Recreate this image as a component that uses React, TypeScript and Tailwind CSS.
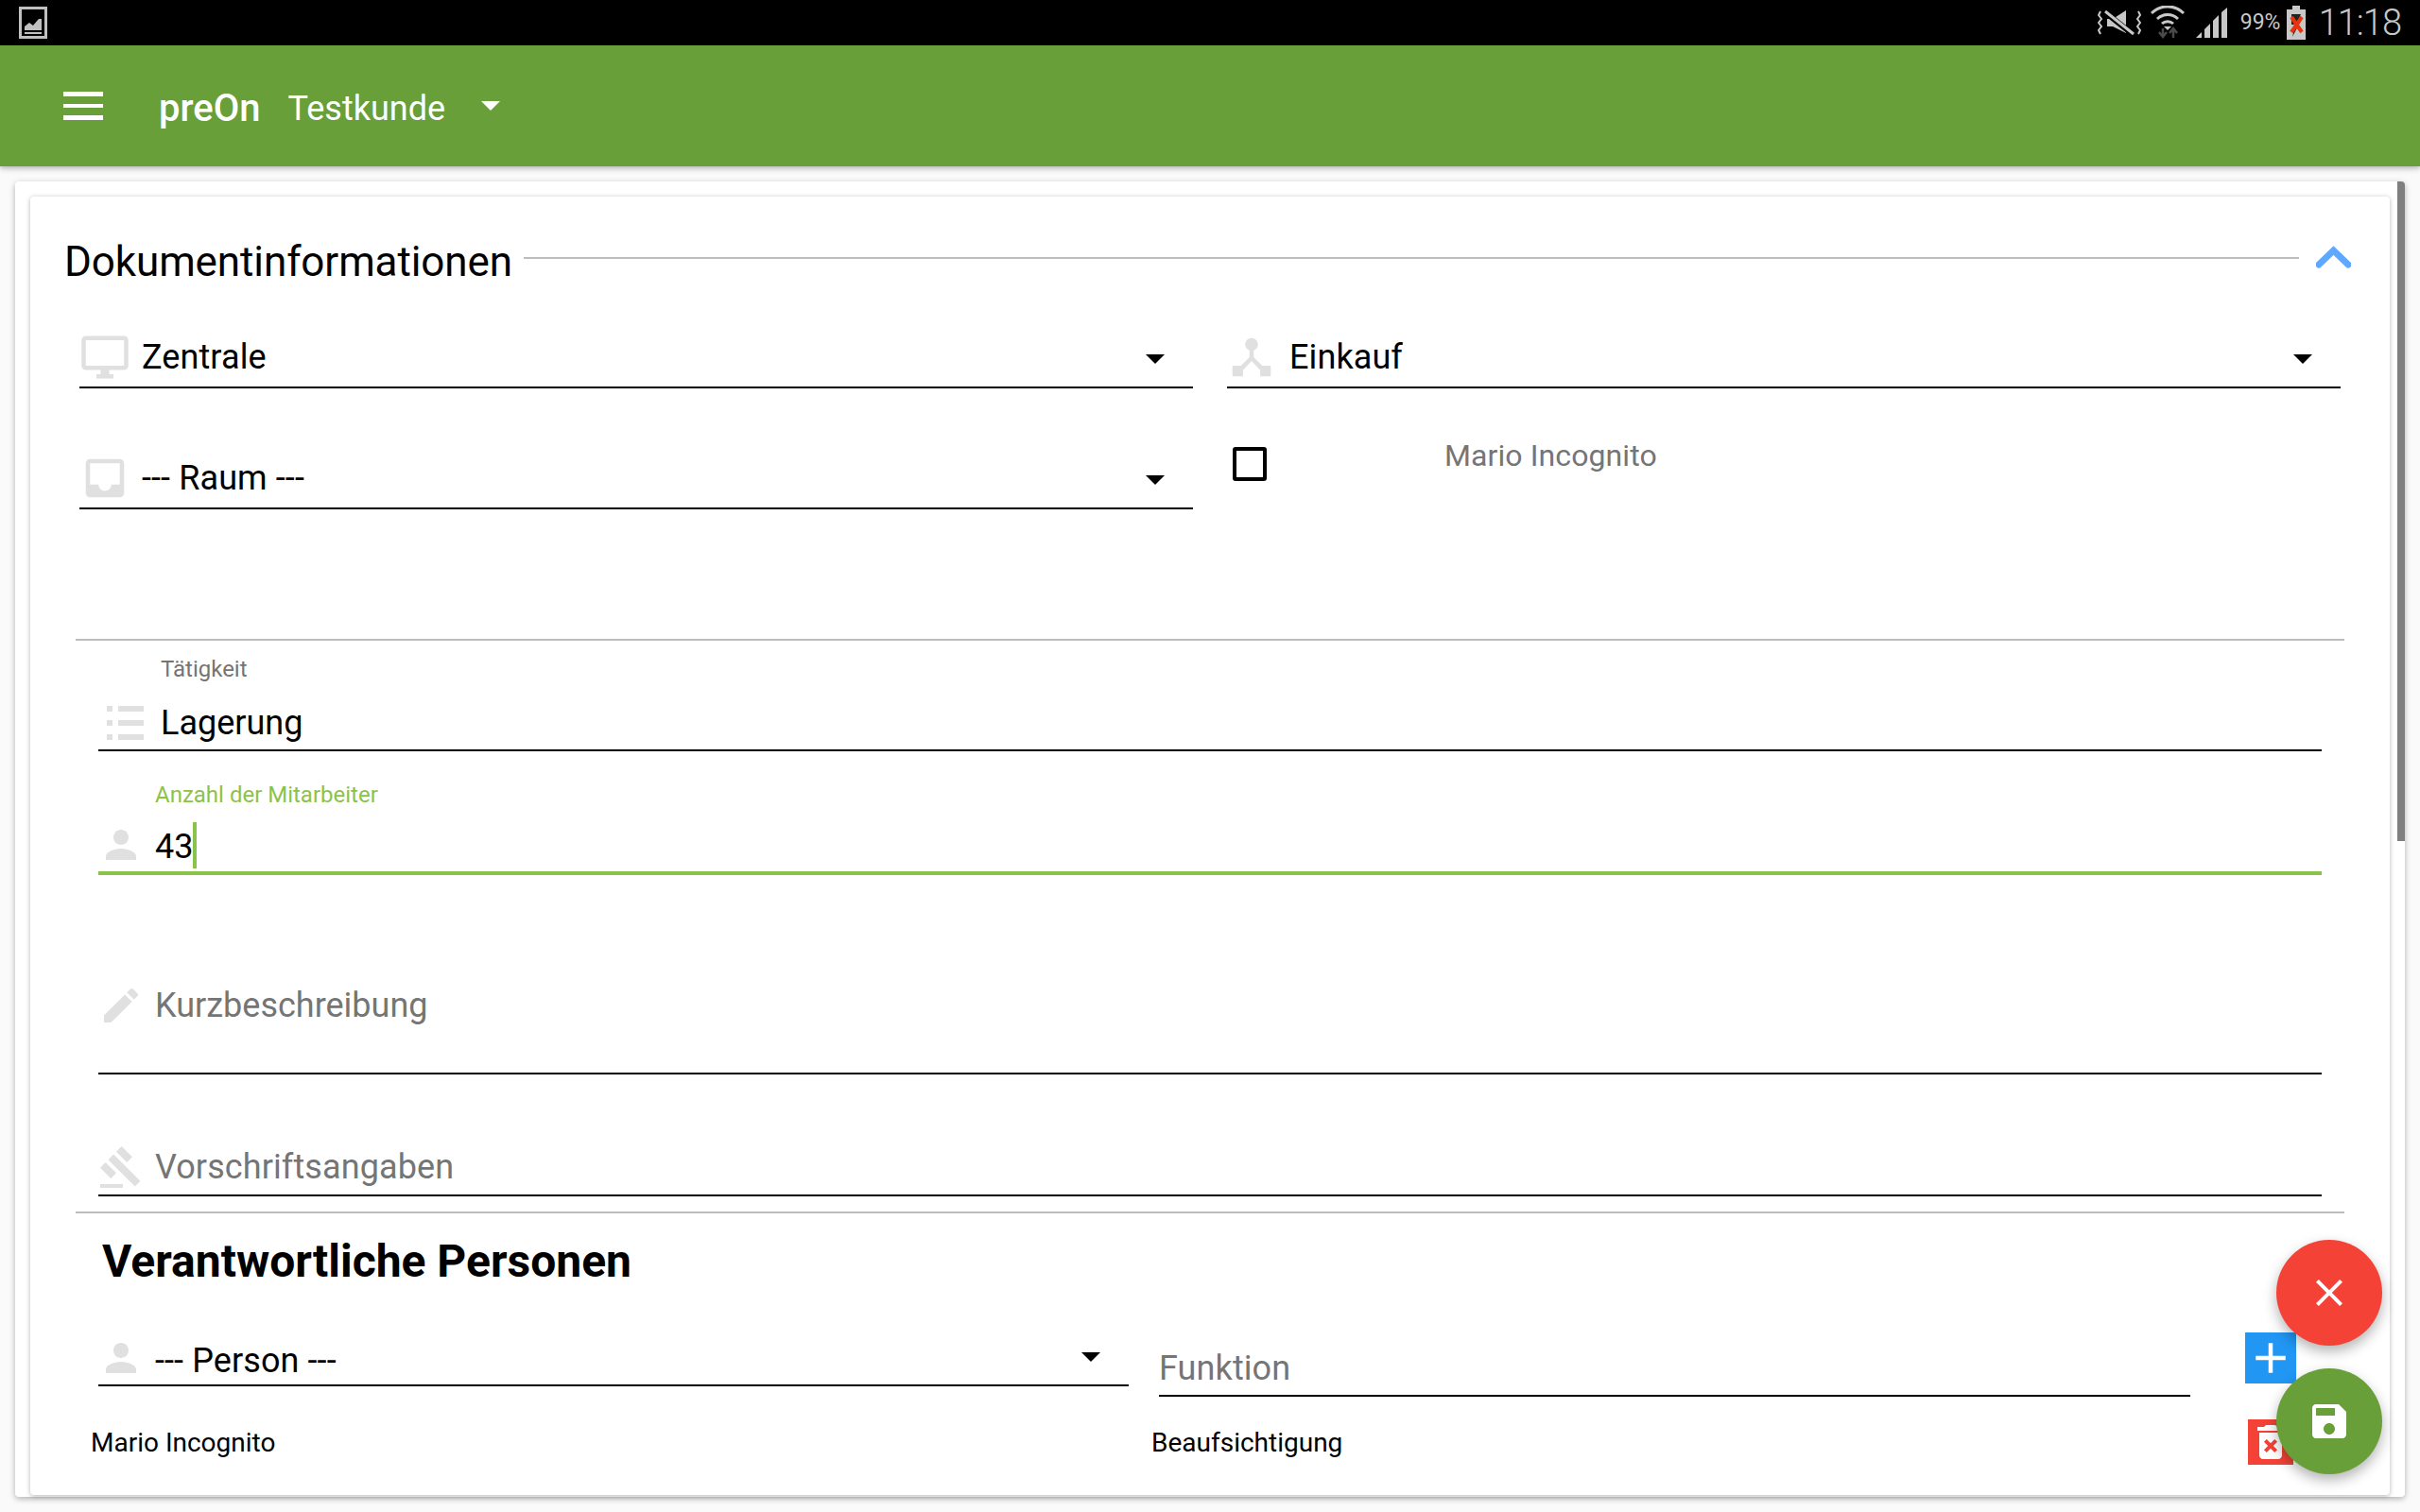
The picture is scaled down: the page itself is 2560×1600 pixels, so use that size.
const ROBOTO = "font-['Roboto',sans-serif]";

function MdIcon({ d, size = 48, className = "" }: { d: string; size?: number; className?: string }) {
	return (
		<svg viewBox="0 0 24 24" width={size} height={size} className={`shrink-0 ${className}`} fill="currentColor">
			<path d={d} />
		</svg>
	);
}

const ICONS = {
	desktop: "M21 2H3c-1.1 0-2 .9-2 2v12c0 1.1.9 2 2 2h7v2H8v2h8v-2h-2v-2h7c1.1 0 2-.9 2-2V4c0-1.1-.9-2-2-2zm0 14H3V4h18v12z",
	inbox: "M19 3H5c-1.1 0-2 .9-2 2v14c0 1.1.9 2 2 2h14c1.1 0 2-.9 2-2V5c0-1.1-.9-2-2-2zm0 12h-4c0 1.66-1.34 3-3 3s-3-1.34-3-3H5V5h14v10z",
	hub: "M17 16l-4-4V8.82C14.16 8.4 15 7.3 15 6c0-1.66-1.34-3-3-3S9 4.34 9 6c0 1.3.84 2.4 2 2.82V12l-4 4H3v5h5v-3.05l4-4.2 4 4.2V21h5v-5h-4z",
	person: "M12 12c2.21 0 4-1.79 4-4s-1.79-4-4-4-4 1.79-4 4 1.79 4 4 4zm0 2c-2.67 0-8 1.34-8 4v2h16v-2c0-2.66-5.33-4-8-4z",
	edit: "M3 17.25V21h3.75L17.81 9.94l-3.75-3.75L3 17.25zM20.71 7.04c.39-.39.39-1.02 0-1.41l-2.34-2.34c-.39-.39-1.02-.39-1.41 0l-1.83 1.83 3.75 3.75 1.83-1.83z",
	gavel: "M1 21h12v2H1zM5.245 8.07l2.83-2.827 14.14 14.142-2.828 2.828zM12.317 1l5.657 5.656-2.83 2.83-5.654-5.66zM3.825 9.485l5.657 5.657-2.828 2.828-5.657-5.657z",
	save: "M17 3H5c-1.11 0-2 .9-2 2v14c0 1.1.89 2 2 2h14c1.1 0 2-.9 2-2V7l-4-4zm-5 16c-1.66 0-3-1.34-3-3s1.34-3 3-3 3 1.34 3 3-1.34 3-3 3zm3-10H5V5h10v4z",
	close: "M19 6.41L17.59 5 12 10.59 6.41 5 5 6.41 10.59 12 5 17.59 6.41 19 12 13.41 17.59 19 19 17.59 13.41 12z",
	plus: "M19 13h-6v6h-2v-6H5v-2h6V5h2v6h6v2z",
	trash: "M6 19c0 1.1.9 2 2 2h8c1.1 0 2-.9 2-2V7H6v12zm2.46-7.12l1.41-1.41L12 12.59l2.12-2.12 1.41 1.41L13.41 14l2.12 2.12-1.41 1.41L12 15.41l-2.12 2.12-1.41-1.41L10.59 14l-2.13-2.12zM15.5 4l-1-1h-5l-1 1H5v2h14V4z",
};

function Caret({ className = "text-black" }: { className?: string }) {
	return (
		<svg viewBox="0 0 20 10" width={20} height={10} className={`shrink-0 ${className}`} fill="currentColor">
			<polygon points="0,0 20,0 10,10" />
		</svg>
	);
}

function StatusBar() {
	return (
		<div className="h-12 bg-black flex items-center shrink-0 text-[#c8c8c8]">
			<svg viewBox="0 0 30 34" width={30} height={34} className="ml-5 shrink-0">
				<rect width="30" height="34" fill="#c0c0c0" />
				<rect x="3" y="3" width="24" height="28" fill="#000" />
				<polygon points="6,25 6,21 11,17 15,20 21,13 24,13 24,25" fill="#c0c0c0" />
				<rect x="6" y="27" width="18" height="2" fill="#c0c0c0" />
			</svg>
			<div className="ml-auto flex items-center h-12">
				<svg viewBox="0 0 46 30" width={46} height={30} fill="none" stroke="#c8c8c8" strokeWidth="2">
					<path d="M3 3 l-2 4 l3 4 l-3 4 l3 4 l-3 4 l2 4" />
					<path d="M43 3 l2 4 l-3 4 l3 4 l-3 4 l3 4 l-2 4" />
					<polygon points="10,11 16,11 30,2 30,26 16,19 10,19" fill="#c8c8c8" stroke="none" />
					<path d="M8 4 L38 28" stroke="#000" strokeWidth="6" />
					<path d="M8 3 L38 27" strokeWidth="3" />
				</svg>
				<svg viewBox="0 0 36 36" width={36} height={36} className="ml-[10px]" fill="none">
					<path d="M1 8 A24 24 0 0 1 35 8" stroke="#c8c8c8" strokeWidth="3" />
					<path d="M7 14 A16 16 0 0 1 29 14" stroke="#c8c8c8" strokeWidth="3" />
					<path d="M12 19 A9 9 0 0 1 24 19" stroke="#c8c8c8" strokeWidth="3" />
					<polygon points="18,26 14,22 22,22" fill="#c8c8c8" />
					<path d="M13 24v8M9 28l4 5 4-5" stroke="#4a4a4a" strokeWidth="2.5" />
					<path d="M24 34v-9M20 29l4-5 4 5" stroke="#4a4a4a" strokeWidth="2.5" />
				</svg>
				<svg viewBox="0 0 33 32" width={33} height={32} className="ml-3" fill="#c8c8c8">
					<polygon points="0,32 6,26 6,32" />
					<polygon points="9,32 9,23 15,17 15,32" />
					<polygon points="18,32 18,14 24,8 24,32" />
					<polygon points="27,32 27,5 33,0 33,32" />
				</svg>
				<span className={`${ROBOTO} text-[23px] ml-[14px] w-[44px] whitespace-nowrap`}>99%</span>
				<svg viewBox="0 0 20 36" width={20} height={36} className="ml-[5px]">
					<rect x="6" y="0" width="8" height="4" fill="#c8c8c8" />
					<rect x="0" y="4" width="20" height="32" fill="#c8c8c8" />
					<polygon points="5,9 15,9 12,16 15,16 6,33 9,20 5,20" fill="#222" />
					<path d="M5 12 L16 28 M16 12 L5 28" stroke="#e8330c" strokeWidth="4" />
				</svg>
				<span className={`${ROBOTO} font-light text-[38px] leading-none ml-[14px] mr-5 tracking-[-1px] whitespace-nowrap`}>11:18</span>
			</div>
		</div>
	);
}

function Header() {
	return (
		<div className="h-32 bg-[#689f38] flex items-center shrink-0 text-white shadow-[0_2px_6px_rgba(0,0,0,0.3)] relative z-10">
			<div className="ml-[67px] w-[42px] flex flex-col gap-[8px]">
				<div className="h-[5px] bg-white" />
				<div className="h-[4px] bg-white" />
				<div className="h-[5px] bg-white" />
			</div>
			<span className={`${ROBOTO} ml-[59px] mt-[6px] text-[40px] font-medium leading-none`}>preOn</span>
			<span className={`${ROBOTO} ml-[29px] mt-[6px] text-[36px] leading-none`}>Testkunde</span>
			<Caret className="text-white ml-[38px] -mt-px" />
		</div>
	);
}

function SelectBox({ icon, text, iconClass = "", textClass = "ml-[12px]" }: { icon: string; text: string; iconClass?: string; textClass?: string }) {
	return (
		<div className="h-[76px] pt-[11px] flex items-center border-b-2 border-black">
			<MdIcon d={icon} size={54} className={`text-[#e0e0e0] ${iconClass}`} />
			<span className={`${textClass} text-[36px] tracking-[0.1px] text-black leading-none`}>{text}</span>
			<Caret className="text-black ml-auto mr-[30px] mt-[4px]" />
		</div>
	);
}

function SectionTitle() {
	return (
		<div className="h-20 flex items-center pl-9">
			<h2 className="mt-1 text-[44px] tracking-[-0.1px] text-black font-normal leading-none">Dokumentinformationen</h2>
			<div className="h-[2px] bg-[#bdbdbd] flex-1 ml-3 -mt-[5px]" />
			<svg viewBox="0 0 37 24" width={37} height={24} className="ml-[18px] mr-[41px] -mt-[6px]" fill="none">
				<path d="M3 20 L18.5 5 L34 20" stroke="#5ea8ff" strokeWidth="7" strokeLinecap="round" strokeLinejoin="miter" />
			</svg>
		</div>
	);
}

function ListIcon() {
	return (
		<svg viewBox="0 0 39 36" width={39} height={36} className="shrink-0 ml-[9px]" fill="#e0e0e0">
			<rect x="0" y="0" width="6" height="6" />
			<rect x="12" y="0" width="27" height="6" />
			<rect x="0" y="15" width="6" height="6" />
			<rect x="12" y="15" width="27" height="6" />
			<rect x="0" y="30" width="6" height="6" />
			<rect x="12" y="30" width="27" height="6" />
		</svg>
	);
}

export default function App() {
	return (
		<div className={`${ROBOTO} w-[2560px] h-[1600px] overflow-hidden bg-[#fafafa] flex flex-col relative`}>
			<StatusBar />
			<Header />
			<main className="pt-4 px-4">
				<div className="relative h-[1392px] bg-white rounded-[4px] shadow-[0_2px_6px_rgba(0,0,0,0.3)] pt-4 px-4">
					<div className="absolute right-0 top-0 w-2 h-[698px] bg-[#7f7f7f] rounded-tr-[4px]" />
					<div className="h-[1374px] bg-white rounded-[4px] shadow-[0_1px_5px_rgba(0,0,0,0.3)] pt-[27px]">
						<SectionTitle />
						<div className="px-12 mt-5">
							<div className="px-1 grid grid-cols-2 gap-x-9 gap-y-[52px]">
								<SelectBox icon={ICONS.desktop} text="Zentrale" />
								<SelectBox icon={ICONS.hub} text="Einkauf" iconClass="-ml-px" textClass="ml-[13px]" />
								<SelectBox icon={ICONS.inbox} text="--- Raum ---" />
								<div className="h-[76px] flex items-start">
									<div className="ml-[6px] mt-[10px] w-9 h-9 border-4 border-black rounded-[3px]" />
									<span className="ml-[188px] text-[32px] tracking-[0.1px] text-[#757575] leading-[38px]">Mario Incognito</span>
								</div>
							</div>

							<div className="h-[2px] bg-[#bdbdbd] mt-[137px]" />

							<div className="px-6">
								<div className="h-[117px] flex flex-col border-b-2 border-black">
									<label className="mt-[18px] ml-[66px] h-6 text-[24px] leading-6 text-[#757575]">Tätigkeit</label>
									<div className="mt-auto h-14 flex items-center">
										<ListIcon />
										<span className="ml-[18px] text-[36px] leading-none text-black">Lagerung</span>
									</div>
								</div>
								<div className="h-[131px] flex flex-col border-b-4 border-[#8bc34a]">
									<label className="mt-[34px] ml-[60px] h-6 text-[24px] leading-6 text-[#8bc34a]">Anzahl der Mitarbeiter</label>
									<div className="mt-auto h-14 flex items-center">
										<MdIcon d={ICONS.person} className="text-[#e0e0e0]" />
										<span className="ml-3 mt-[3px] text-[36px] leading-none text-black">43</span>
										<div className="w-1 h-[49px] bg-[#8bc34a]" />
									</div>
								</div>
								<div className="h-[211px] border-b-2 border-black pt-[114px]">
									<div className="h-12 flex items-center">
										<MdIcon d={ICONS.edit} className="text-[#e0e0e0]" />
										<span className="ml-3 text-[36px] leading-none text-[#757575]">Kurzbeschreibung</span>
									</div>
								</div>
								<div className="h-[129px] border-b-2 border-black pt-[74px]">
									<div className="h-12 flex items-center">
										<MdIcon d={ICONS.gavel} className="text-[#e0e0e0]" />
										<span className="ml-3 text-[36px] tracking-[0.1px] leading-none text-[#757575]">Vorschriftsangaben</span>
									</div>
								</div>
							</div>

							<div className="h-[2px] bg-[#bdbdbd] mt-4" />

							<div className="px-6">
								<h3 className="h-[101px] flex items-center pl-[4px] text-[48px] font-bold text-black">Verantwortliche Personen</h3>
								<div className="flex items-start h-[94px]">
									<div className="w-[1090px] h-[82px] pt-6 border-b-2 border-black shrink-0">
										<div className="h-14 flex items-center">
											<MdIcon d={ICONS.person} className="text-[#e0e0e0]" />
											<span className="ml-3 mt-[6px] text-[36px] tracking-[0.1px] leading-none text-black">--- Person ---</span>
											<Caret className="ml-auto mr-[30px] -mt-[2px]" />
										</div>
									</div>
									<div className="w-[1091px] h-[93px] ml-8 flex items-end border-b-2 border-black shrink-0">
										<span className="h-[55px] text-[36px] tracking-[0.1px] leading-[54px] text-[#757575]">Funktion</span>
									</div>
									<div className="ml-[58px] mt-[25px] w-[54px] h-[54px] bg-[#2196f3] flex items-center justify-center text-white shrink-0">
										<MdIcon d={ICONS.plus} size={54} />
									</div>
								</div>
								<div className="flex items-center mt-[23px] h-12 -ml-2 text-[28px] text-black">
									<span className="w-[1122px] mt-[2px]">Mario Incognito</span>
									<span className="mt-[2px]">Beaufsichtigung</span>
									<div className="ml-auto mr-[30px] w-12 h-12 bg-[#f44336] text-white shrink-0">
										<MdIcon d={ICONS.trash} />
									</div>
								</div>
							</div>
						</div>
					</div>
				</div>
			</main>

			<button type="button" className="absolute left-[2408px] top-[1312px] w-28 h-28 rounded-full bg-[#f44336] flex items-center justify-center text-white shadow-[0_6px_14px_rgba(0,0,0,0.3)]">
				<MdIcon d={ICONS.close} />
			</button>
			<button type="button" className="absolute left-[2408px] top-[1448px] w-28 h-28 rounded-full bg-[#689f38] flex items-center justify-center text-white shadow-[0_6px_14px_rgba(0,0,0,0.3)]">
				<MdIcon d={ICONS.save} />
			</button>
		</div>
	);
}
